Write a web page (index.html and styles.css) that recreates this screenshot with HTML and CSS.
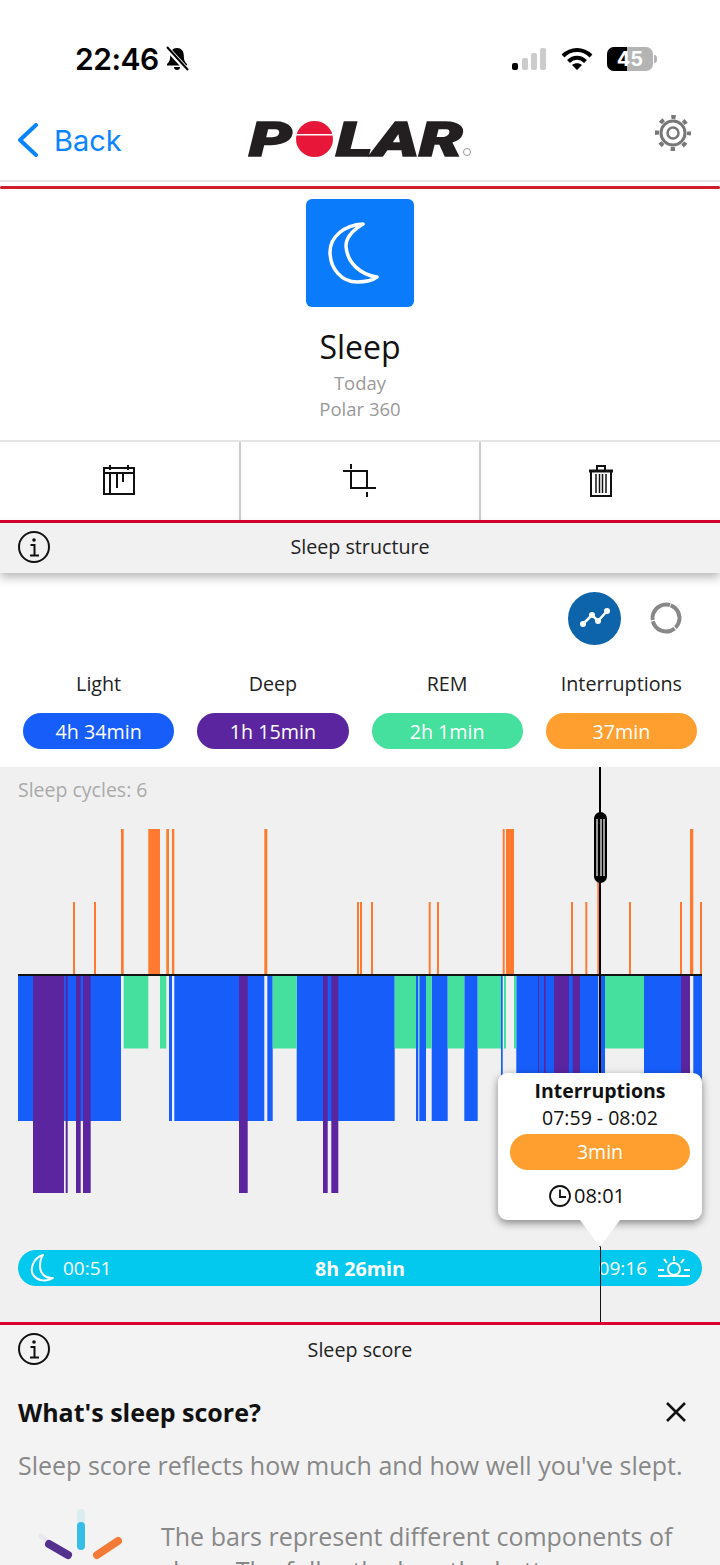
FILE: index.html
```html
<!doctype html>
<html lang="en">
<head>
  <meta charset="UTF-8">
  <title>Sleep</title>
  <link rel="stylesheet" href="styles.css">
</head>
<body>

<div class="status">
  <div class="status-left">
    <span class="clock">22:46</span>
    <svg class="bell" width="26" height="28" viewBox="0 0 26 28">
      <path d="M13 3c-4.600 0-6.800 3.500-6.800 7.500 0 4.500-1 6.500-3.200 8.500v1.500h20V19c-2.200-2-3.200-4-3.200-8.500C19.800 6.500 17.600 3 13 3z" fill="#000"/>
      <path d="M10 22h6a3 3 0 0 1-6 0z" fill="#000"/>
      <path d="M2 2l22 24" stroke="#fff" stroke-width="5"/>
      <path d="M3 2l21 23" stroke="#000" stroke-width="2"/>
    </svg>
  </div>
  <div class="status-right">
    <svg width="36" height="22" viewBox="0 0 36 22">
      <rect x="1" y="15" width="6" height="7" rx="2" fill="#000"/>
      <rect x="11" y="10" width="6" height="12" rx="2" fill="#ccc"/>
      <rect x="20" y="5" width="6" height="17" rx="2" fill="#ccc"/>
      <rect x="29" y="0" width="6" height="22" rx="2" fill="#ccc"/>
    </svg>
    <svg width="32" height="24" viewBox="0 0 32 24" fill="none" stroke="#000" stroke-width="4">
      <path d="M2 9c8-8 20-8 28 0"/>
      <path d="M7.500 14.500c5-5 12-5 17 0"/>
      <path d="M16 23l-5-5c3-2.500 7-2.500 10 0z" fill="#000" stroke="none"/>
    </svg>
    <div class="battery">
      <div class="battery-cell"><span class="battery-fill"></span><span class="battery-num">45</span></div>
      <span class="battery-tip"></span>
    </div>
  </div>
</div>

<div class="nav">
  <div class="back">
    <svg width="22" height="34" viewBox="0 0 22 34" fill="none" stroke="#0a84ff" stroke-width="4" stroke-linecap="round" stroke-linejoin="round">
      <path d="M19 2L3 17l16 15"/>
    </svg>
    <span>Back</span>
  </div>
  <svg class="logo" width="224" height="38" viewBox="248 122 224 38">
    <text class="logo-text" x="249" y="157" textLength="43" lengthAdjust="spacingAndGlyphs">P</text>
    <ellipse cx="314.500" cy="140" rx="18.500" ry="18" fill="#e8173a"/>
    <rect x="294" y="135" width="42" height="1.500" fill="#fff"/>
    <text class="logo-text" x="336" y="157" textLength="127" lengthAdjust="spacingAndGlyphs">LAR</text>
    <circle cx="467" cy="153" r="3.500" fill="none" stroke="#999" stroke-width="1"/>
  </svg>
  <svg class="gear" width="40" height="40" viewBox="0 0 40 40" fill="none" stroke="#777">
    <circle cx="20" cy="20" r="16" stroke-width="4" stroke-dasharray="4.500 8.066" stroke-dashoffset="2.250"/>
    <circle cx="20" cy="20" r="12" stroke-width="3"/>
    <circle cx="20" cy="20" r="5.500" stroke-width="2.500"/>
  </svg>
</div>
<div class="red-rule rounded"></div>

<div class="hero">
  <div class="tile">
    <svg width="108" height="108" viewBox="0 0 108 108" fill="none" stroke="#fff" stroke-width="3.500" stroke-linejoin="round">
      <path d="M57 25C38 26 24 38 24 53c0 17 12 30 27 30 9 0 16-2 20-5-16-2-30-14-31-31 0-9 7-16 17-22z"/>
    </svg>
  </div>
  <h1>Sleep</h1>
  <p>Today</p>
  <p>Polar 360</p>
</div>

<div class="actions">
  <div class="action">
    <svg width="34" height="32" viewBox="0 0 34 32" fill="none" stroke="#111" stroke-width="2">
      <rect x="2" y="3" width="30" height="26"/>
      <path d="M2 8h30"/>
      <path d="M8 0v5M26 0v5M8 8v21M15 8v15M21 8v9"/>
    </svg>
  </div>
  <div class="action">
    <svg width="34" height="34" viewBox="0 0 34 34" fill="none" stroke="#111" stroke-width="2">
      <path d="M0 7H25M8 7V25M7 24H33M24 7V24M8 0V5M24 28V33"/>
    </svg>
  </div>
  <div class="action">
    <svg width="26" height="34" viewBox="0 0 26 34" fill="none" stroke="#111" stroke-width="2">
      <path d="M9 6V2h8v4"/>
      <path d="M1 7h24" stroke-width="3"/>
      <path d="M3 8v24h20V8"/>
      <path d="M8 10v19M11.500 10v19M14.500 10v19M18 10v19" stroke-width="1.500"/>
    </svg>
  </div>
</div>

<div class="red-rule"></div>
<div class="section-head shadowed">
  <svg class="info" width="32" height="32" viewBox="0 0 32 32" fill="none" stroke="#111" stroke-width="2">
    <circle cx="16" cy="16" r="15"/>
    <circle cx="16" cy="9" r="1.800" fill="#111" stroke="none"/>
    <path d="M12.500 14H16.500V24M12 24.500H21"/>
  </svg>
  <span>Sleep structure</span>
</div>

<div class="toggles">
  <div class="toggle-on">
    <svg width="32" height="22" viewBox="0 0 32 22" fill="none" stroke="#fff" stroke-width="2.500">
      <path d="M4 17L13 8l6 6L28 4"/>
      <g fill="#fff" stroke="none">
        <circle cx="4" cy="17" r="3"/><circle cx="13" cy="8" r="3"/><circle cx="19" cy="14" r="3"/><circle cx="28" cy="4" r="3"/>
      </g>
    </svg>
  </div>
  <svg class="ring" width="32" height="32" viewBox="0 0 32 32" fill="none" stroke="#888" stroke-width="4">
    <circle cx="16" cy="16" r="13.500" stroke-dasharray="27 1.270"/>
  </svg>
</div>

<div class="totals">
  <div class="total"><label>Light</label><span class="pill light">4h 34min</span></div>
  <div class="total"><label>Deep</label><span class="pill deep">1h 15min</span></div>
  <div class="total"><label>REM</label><span class="pill rem">2h 1min</span></div>
  <div class="total"><label>Interruptions</label><span class="pill wake">37min</span></div>
</div>

<div class="chart">
  <div class="cycles">Sleep cycles: 6</div>

  <svg class="bars" width="684" height="364" viewBox="18 829 684 364">
    <!-- light -->
    <g fill="#165dfa">
      <rect x="18" y="976" width="103" height="145"/>
      <rect x="169" y="976" width="3" height="145"/>
      <rect x="174.300" y="976" width="90" height="145"/>
      <rect x="267.300" y="976" width="5.400" height="145"/>
      <rect x="296.700" y="976" width="98" height="145"/>
      <rect x="416" y="976" width="2.300" height="145"/>
      <rect x="419.300" y="976" width="6.700" height="145"/>
      <rect x="431.700" y="976" width="16" height="145"/>
      <rect x="464.300" y="976" width="13.400" height="145"/>
      <rect x="501" y="976" width="1.700" height="145"/>
      <rect x="516.300" y="976" width="82" height="145"/>
      <rect x="601" y="976" width="4" height="145"/>
      <rect x="644" y="976" width="46" height="145"/>
      <rect x="693.300" y="976" width="8.700" height="145"/>
    </g>
    <!-- rem -->
    <g fill="#45df9e">
      <rect x="123.700" y="976" width="24.600" height="72.500"/>
      <rect x="160" y="976" width="6.300" height="72.500"/>
      <rect x="272.700" y="976" width="24" height="72.500"/>
      <rect x="394.700" y="976" width="21.300" height="72.500"/>
      <rect x="418.300" y="976" width="1" height="72.500"/>
      <rect x="426" y="976" width="5.700" height="72.500"/>
      <rect x="447.700" y="976" width="16.600" height="72.500"/>
      <rect x="477.700" y="976" width="23.300" height="72.500"/>
      <rect x="504" y="976" width="2" height="72.500"/>
      <rect x="514" y="976" width="2.300" height="72.500"/>
      <rect x="605" y="976" width="39" height="72.500"/>
    </g>
    <!-- deep -->
    <g fill="#5a259f">
      <rect x="33" y="976" width="31" height="217"/>
      <rect x="65.700" y="976" width="2" height="217"/>
      <rect x="76" y="976" width="4.700" height="217"/>
      <rect x="83" y="976" width="7.700" height="217"/>
      <rect x="239" y="976" width="8.700" height="217"/>
      <rect x="323" y="976" width="4.700" height="217"/>
      <rect x="331.300" y="976" width="7" height="217"/>
      <rect x="538" y="976" width="1" height="145"/>
      <rect x="544" y="976" width="1.700" height="145"/>
      <rect x="554" y="976" width="15" height="145"/>
      <rect x="572.700" y="976" width="7.300" height="145"/>
      <rect x="681" y="976" width="9" height="145"/>
    </g>
    <!-- interruptions -->
    <g fill="#ff7a30">
      <rect x="121" y="829" width="2.700" height="146"/>
      <rect x="148.300" y="829" width="11.700" height="146"/>
      <rect x="166.300" y="829" width="2.700" height="146"/>
      <rect x="172" y="829" width="2.300" height="146"/>
      <rect x="264.300" y="829" width="3" height="146"/>
      <rect x="502.700" y="829" width="2" height="146"/>
      <rect x="506" y="829" width="8" height="146"/>
      <rect x="597.300" y="829" width="2.700" height="146"/>
      <rect x="690" y="829" width="3.300" height="146"/>
      <rect x="73" y="902" width="2" height="73"/>
      <rect x="94" y="902" width="2" height="73"/>
      <rect x="357" y="902" width="2" height="73"/>
      <rect x="360" y="902" width="2" height="73"/>
      <rect x="371" y="902" width="2" height="73"/>
      <rect x="428.700" y="902" width="2" height="73"/>
      <rect x="437" y="902" width="2" height="73"/>
      <rect x="571" y="902" width="2" height="73"/>
      <rect x="585.300" y="902" width="2" height="73"/>
      <rect x="629" y="902" width="2" height="73"/>
      <rect x="680" y="902" width="2" height="73"/>
      <rect x="700" y="902" width="2" height="73"/>
    </g>
    <rect x="18" y="974" width="684" height="2" fill="#111"/>
  </svg>

  <div class="span-bar">
    <div class="span-side">
      <svg width="24" height="28" viewBox="0 0 24 28" fill="none" stroke="#fff" stroke-width="2" stroke-linejoin="round">
        <path d="M13 1C3 4-1 16 4 22c4 5 13 6 19 2-8 1-13-5-13-12 0-4 1-8 3-11z"/>
      </svg>
      <span>00:51</span>
    </div>
    <b>8h 26min</b>
    <div class="span-side end">
      <span>09:16</span>
      <svg width="32" height="26" viewBox="0 0 32 26" fill="none" stroke="#fff" stroke-width="2">
        <circle cx="16" cy="14" r="6"/>
        <path d="M16 1v5M6 4l3 4M26 4l-3 4M0 15h6M26 15h6M0 21h32"/>
      </svg>
    </div>
  </div>

  <!-- cursor and its handle sit over the bars -->
  <div class="cursor"></div>
  <div class="cursor-thin"></div>
  <div class="handle"><span></span><span></span><span></span></div>

  <div class="popup">
    <strong>Interruptions</strong>
    <div class="popup-range">07:59 - 08:02</div>
    <div class="popup-pill">3min</div>
    <div class="popup-at">
      <svg width="22" height="22" viewBox="0 0 22 22" fill="none" stroke="#111" stroke-width="1.800">
        <circle cx="11" cy="11" r="10"/>
        <path d="M11 4.500V12h6"/>
      </svg>
      <span>08:01</span>
    </div>
    <i class="popup-arrow"></i>
  </div>
</div>

<div class="red-rule"></div>
<div class="score">
  <div class="section-head">
    <svg class="info" width="32" height="32" viewBox="0 0 32 32" fill="none" stroke="#111" stroke-width="2">
      <circle cx="16" cy="16" r="15"/>
      <circle cx="16" cy="9" r="1.800" fill="#111" stroke="none"/>
      <path d="M12.500 14H16.500V24M12 24.500H21"/>
    </svg>
    <span>Sleep score</span>
  </div>
  <div class="score-title">
    <h2>What's sleep score?</h2>
    <svg width="22" height="22" viewBox="0 0 22 22" stroke="#111" stroke-width="2.500"><path d="M2 2l18 18M20 2L2 20"/></svg>
  </div>
  <p class="score-lead">Sleep score reflects how much and how well you've slept.</p>
  <div class="score-row">
    <svg width="96" height="60" viewBox="0 0 96 60" fill="none" stroke-linecap="round">
      <path d="M45 4v8" stroke="#35bde5" stroke-width="8" opacity="0.12"/>
      <path d="M5 27l4 3" stroke="#54308f" stroke-width="5" opacity="0.05"/>
      <path d="M45 17v20" stroke="#35bde5" stroke-width="8"/>
      <path d="M13 35l19 11" stroke="#54308f" stroke-width="8"/>
      <path d="M82 32L61 46" stroke="#f47a38" stroke-width="8"/>
    </svg>
    <p>The bars represent different components of sleep. The fuller the bar, the better you slept.</p>
  </div>
</div>

</body>
</html>
```

FILE: styles.css
```css
html, body {
  margin: 0;
  height: 1565px;
  overflow: hidden;
}

body {
  background: #fff;
  color: #111;
  font-family: "Open Sans", "Noto Sans", sans-serif;
}

svg {
  display: block;
  flex: none;
}

/* status bar */

.status {
  height: 100px;
  padding: 17px 63px 0 75px;
  box-sizing: border-box;
  display: flex;
  justify-content: space-between;
  align-items: center;
}

.status-left {
  display: flex;
  align-items: center;
  gap: 5px;
}

.clock {
  font-family: Inter, sans-serif;
  font-size: 30px;
  font-weight: 600;
  color: #000;
  letter-spacing: -0.5px;
}

.status-right {
  display: flex;
  align-items: center;
  gap: 14px;
}

.battery {
  display: flex;
  align-items: center;
  gap: 1px;
}

.battery-cell {
  position: relative;
  width: 46px;
  height: 24px;
  border-radius: 7px;
  background: #b4b4b4;
  overflow: hidden;
  text-align: center;
  color: #fff;
  font: 700 20px/24px Inter, sans-serif;
}

.battery-fill {
  position: absolute;
  left: 0;
  top: 0;
  bottom: 0;
  width: 20px;
  background: #000;
}

.battery-num {
  position: relative;
}

.battery-tip {
  width: 3px;
  height: 8px;
  border-radius: 0 3px 3px 0;
  background: #b4b4b4;
}

/* nav */

.nav {
  height: 80px;
  padding: 0 27px 0 17px;
  border-bottom: 2px solid #e5e5e5;
  display: grid;
  grid-template-columns: 1fr auto 1fr;
  align-items: center;
}

.back {
  display: flex;
  align-items: center;
  gap: 15px;
  color: #0a84ff;
  font-family: Inter, sans-serif;
  font-size: 29px;
}

.logo {
  position: relative;
  left: 5px;
  overflow: visible;
}

.logo-text {
  font-family: Roboto, "Liberation Sans", sans-serif;
  font-size: 48px;
  font-weight: 900;
  font-style: italic;
  fill: #231f20;
  stroke: #231f20;
  stroke-width: 1.500px;
}

.gear {
  justify-self: end;
  margin-top: -14px;
}

.red-rule {
  height: 3px;
  background: #d9032f;
}

.red-rule.rounded {
  margin-top: 4px;
  border-radius: 2px;
  background: #cf1f2e;
}

/* hero */

.hero {
  height: 251px;
  box-sizing: border-box;
  padding-top: 10px;
  text-align: center;
}

.tile {
  width: 108px;
  height: 108px;
  margin: 0 auto;
  border-radius: 6px;
  background: #0a7bfb;
}

.hero h1 {
  margin: 18px 0 1px;
  font-size: 32px;
  font-weight: 400;
  line-height: 44px;
  color: #111;
}

.hero p {
  margin: 0;
  font-size: 18.500px;
  line-height: 26px;
  color: #999;
}

/* actions */

.actions {
  height: 80px;
  box-sizing: border-box;
  border-top: 2px solid #e4e4e4;
  display: flex;
}

.action {
  flex: 1;
  display: flex;
  align-items: center;
  justify-content: center;
  border-left: 2px solid #ccc;
}

.action:first-child {
  border-left: 0;
}

/* section headers */

.section-head {
  position: relative;
  height: 50px;
  box-sizing: border-box;
  padding-bottom: 4px;
  display: flex;
  align-items: center;
  justify-content: center;
  background: #f1f1f1;
  font-size: 19.700px;
  color: #222;
}

.section-head.shadowed {
  box-shadow: 0 4px 10px rgba(0,0,0,0.3);
}

.info {
  position: absolute;
  left: 18px;
  top: 8px;
}

/* toggles */

.toggles {
  height: 90px;
  padding: 0 38px 0 0;
  display: flex;
  justify-content: flex-end;
  align-items: center;
  gap: 29px;
}

.toggle-on {
  width: 53px;
  height: 53px;
  border-radius: 50%;
  background: #0e64aa;
  display: flex;
  align-items: center;
  justify-content: center;
}

.ring {
  transform: rotate(-70deg);
}

/* totals */

.totals {
  height: 104px;
  padding: 0 23px;
  display: grid;
  grid-template-columns: repeat(4, 1fr);
  gap: 23px;
}

.total {
  display: flex;
  flex-direction: column;
  align-items: center;
  white-space: nowrap;
}

.total label {
  margin-top: 8px;
  margin-bottom: 16px;
  font-size: 19.700px;
  line-height: 26px;
  color: #222;
}

.pill {
  width: 100%;
  height: 36px;
  border-radius: 18px;
  color: #fff;
  text-align: center;
  font-size: 19.700px;
  line-height: 38px;
}

.pill.light { background: #165dfa; }
.pill.deep { background: #5a259f; }
.pill.rem { background: #45df9e; }
.pill.wake { background: #ff9f2f; }

/* chart */

.chart {
  position: relative;
  height: 555px;
  box-sizing: border-box;
  padding: 10px 18px 0;
  background: #f0f0f0;
}

.cycles {
  height: 52px;
  font-size: 19.500px;
  line-height: 26px;
  color: #aaa;
}

.span-bar {
  margin-top: 57px;
  height: 36px;
  padding: 0 12px;
  border-radius: 18px;
  background: #03c9ee;
  color: #fff;
  display: grid;
  grid-template-columns: 1fr auto 1fr;
  align-items: center;
  font-size: 19px;
}

.span-bar b {
  font-size: 19.700px;
  font-weight: 700;
}

.span-side {
  display: flex;
  align-items: center;
  gap: 9px;
}

.span-side.end {
  justify-content: flex-end;
  gap: 11px;
}

.cursor {
  position: absolute;
  left: 599px;
  top: 0;
  width: 2px;
  height: 480px;
  background: #000;
}

.cursor-thin {
  position: absolute;
  left: 599.500px;
  top: 480px;
  width: 1.500px;
  height: 75px;
  background: #111;
}

.handle {
  position: absolute;
  left: 594px;
  top: 45px;
  width: 13px;
  height: 71px;
  box-sizing: border-box;
  border: 2px solid #000;
  border-top-width: 7px;
  border-bottom-width: 7px;
  border-radius: 7px;
  background: #000;
  display: flex;
  justify-content: space-between;
}

.handle span {
  width: 2px;
  background: #9a9a9a;
}

.popup {
  position: absolute;
  left: 498px;
  top: 306px;
  width: 204px;
  height: 147px;
  box-sizing: border-box;
  padding: 5px 12px 0;
  border-radius: 9px;
  background: #fff;
  box-shadow: 0 3px 8px rgba(0,0,0,0.45);
  text-align: center;
  font-size: 19.500px;
  line-height: 26px;
}

.popup strong {
  display: block;
  font-weight: 700;
  color: #111;
}

.popup-range {
  margin-top: 1px;
}

.popup-pill {
  margin-top: 3px;
  height: 36px;
  border-radius: 18px;
  background: #ff9f2f;
  color: #fff;
  line-height: 36px;
}

.popup-at {
  margin-top: 13px;
  padding-right: 26px;
  display: flex;
  justify-content: center;
  align-items: center;
  gap: 3px;
  font-size: 20px;
}

.popup-arrow {
  position: absolute;
  left: 82px;
  top: 147px;
  width: 0;
  height: 0;
  border-left: 20px solid transparent;
  border-right: 20px solid transparent;
  border-top: 27px solid #fff;
}

/* score */

.score {
  height: 240px;
  background: #f3f3f3;
}

.score .section-head {
  height: 48px;
  padding-bottom: 0;
  background: none;
}

.score-title {
  margin-top: 22px;
  padding: 0 33px 0 18px;
  display: flex;
  justify-content: space-between;
  align-items: center;
}

.score-title h2 {
  margin: 0;
  font-size: 25px;
  line-height: 34px;
  font-weight: 700;
  color: #111;
}

.score-lead {
  margin: 19px 18px 0;
  font-size: 25px;
  line-height: 34px;
  color: #888;
  white-space: nowrap;
}

.score-row {
  margin-top: 37px;
  padding: 0 47px 0 36px;
  display: flex;
  gap: 29px;
}

.score-row svg {
  margin-top: -10px;
}

.score-row p {
  margin: 0;
  font-size: 25px;
  line-height: 34px;
  color: #888;
}
```
